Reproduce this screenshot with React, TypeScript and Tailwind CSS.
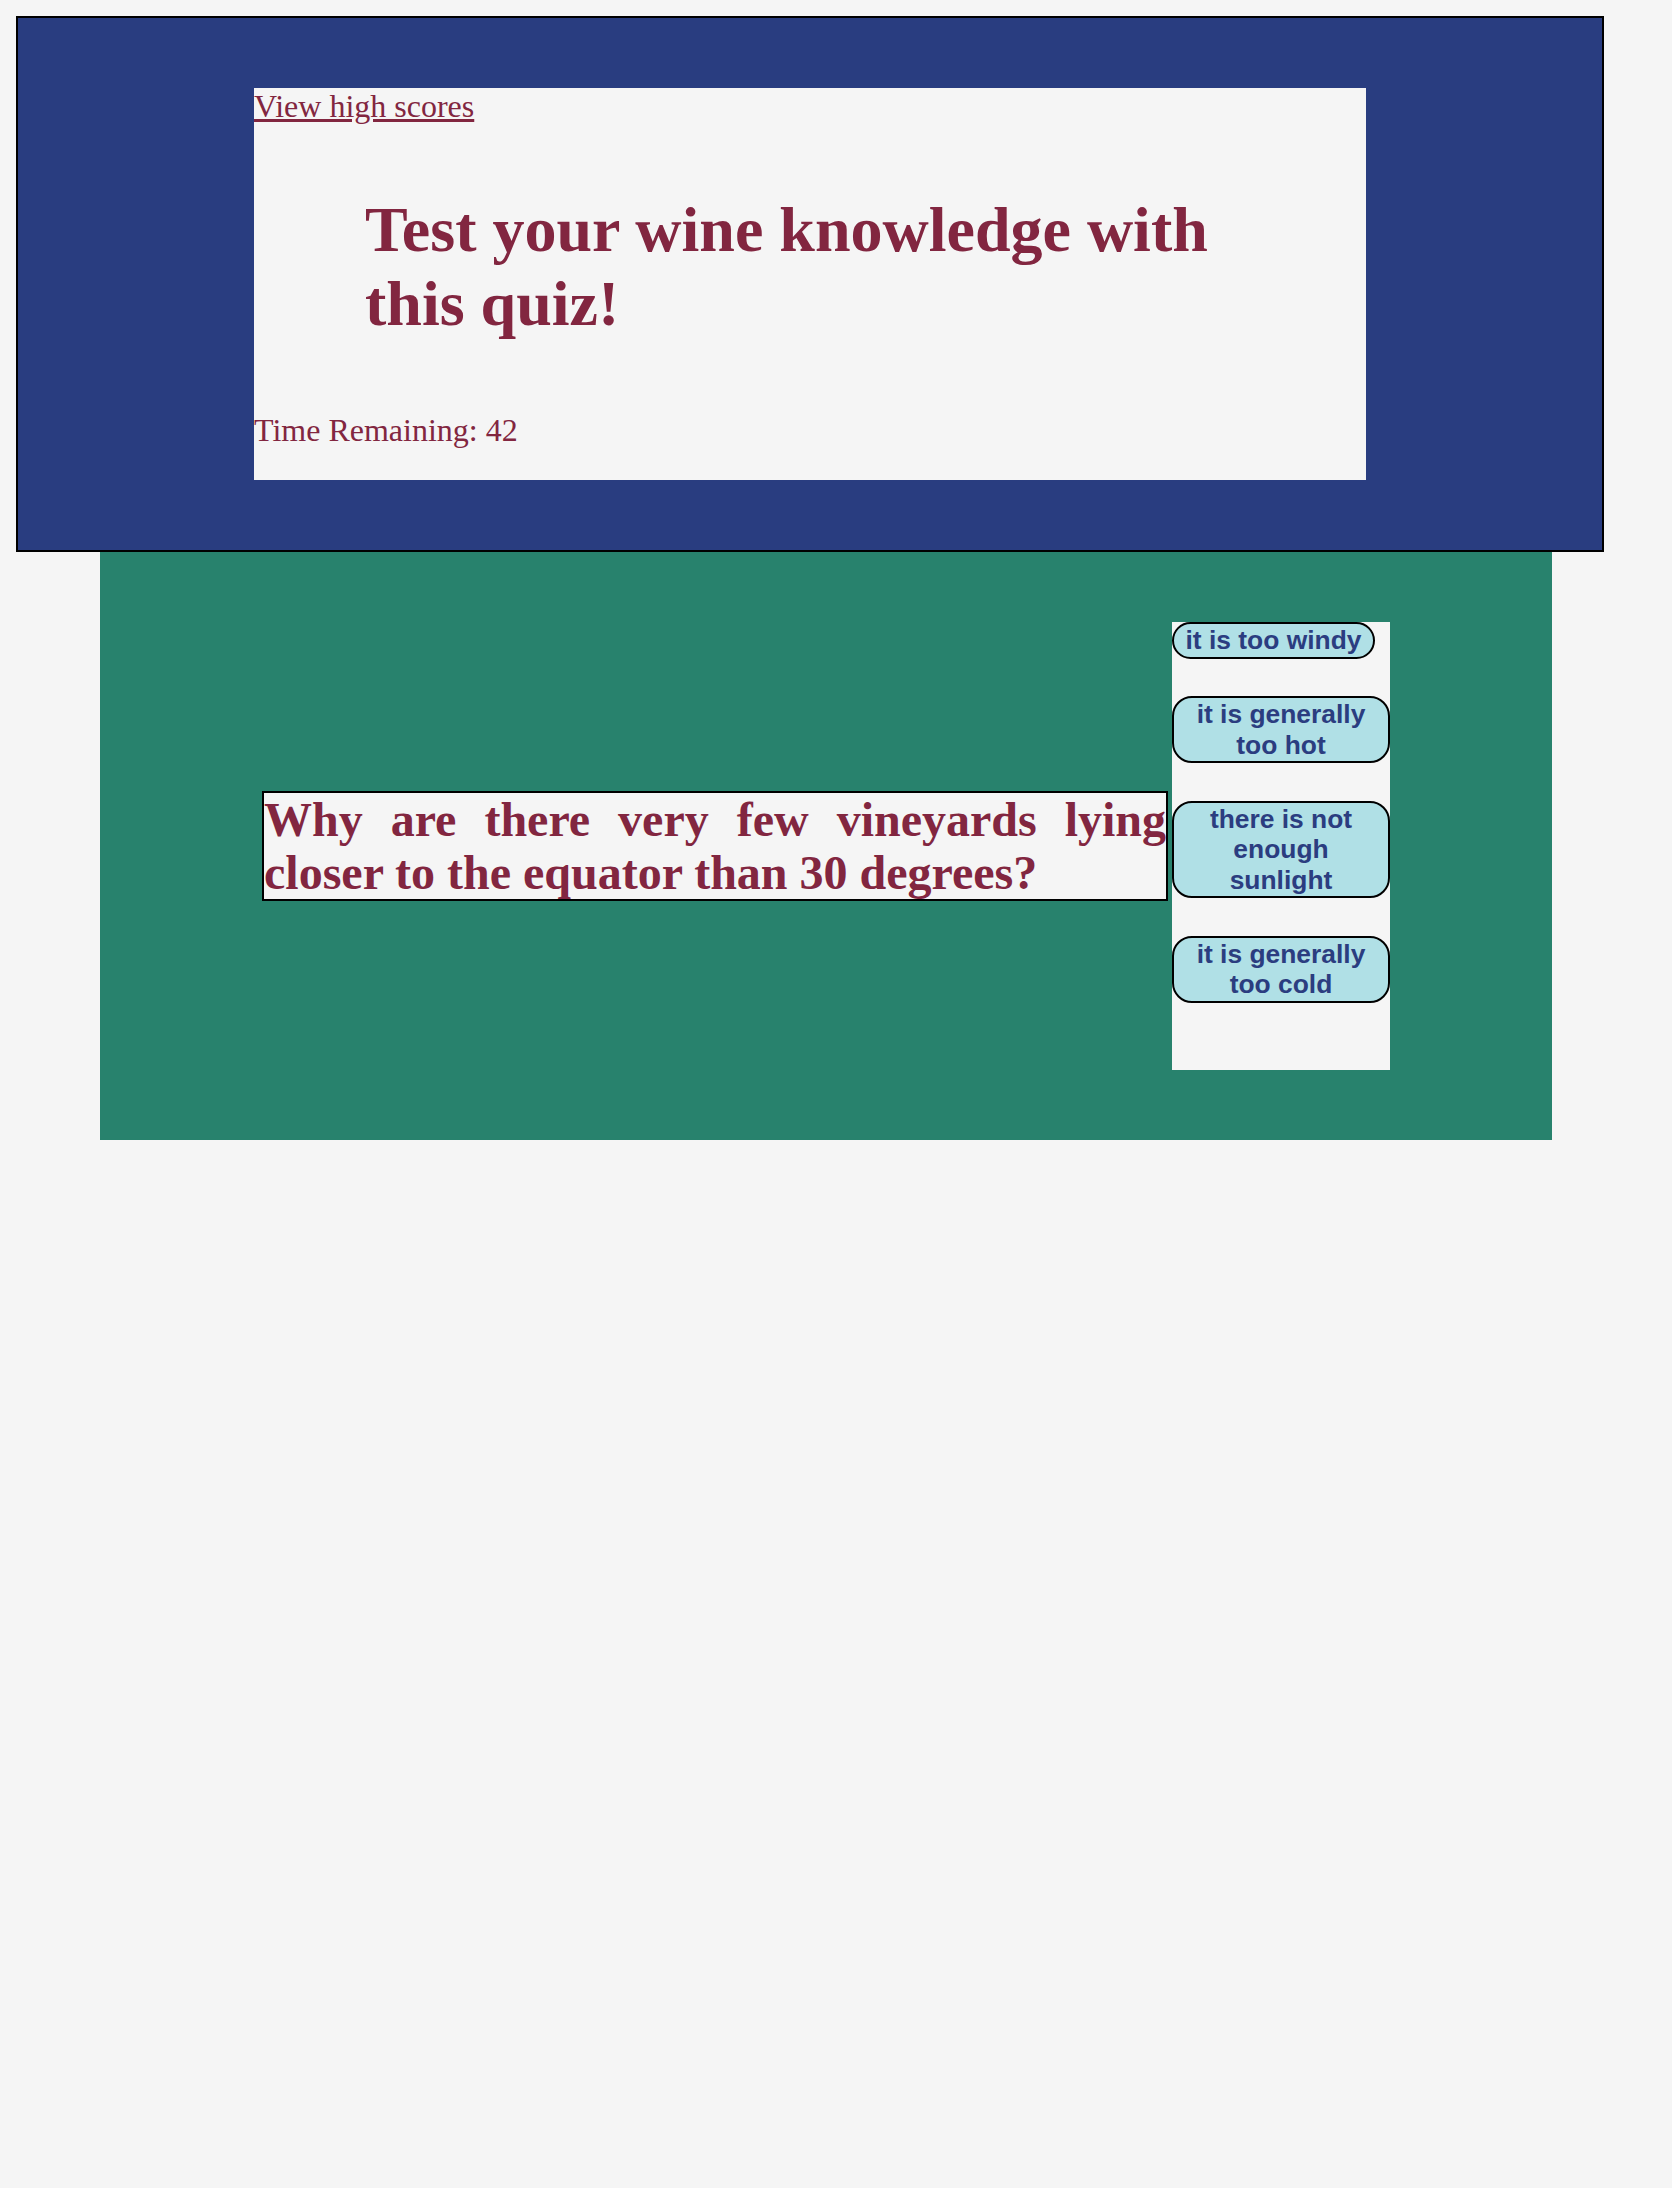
import React from "react";

const answers = [
  "it is too windy",
  "it is generally too hot",
  "there is not enough sunlight",
  "it is generally too cold",
];

export default function App() {
  return (
    <div className="min-h-screen w-full bg-[#f5f5f5] pt-[16px]" style={{ fontFamily: '"Liberation Serif", "Times New Roman", serif' }}>
      <header className="ml-[16px] w-[1588px] border-2 border-black bg-[#293d80] pt-[70px] pb-[70px]">
        <div className="mx-auto w-[1112px] bg-[#f5f5f5] pb-[31px]">
          <a href="#" className="block w-fit text-[32px] leading-[37px] text-[#822640] underline">
            View high scores
          </a>
          <h1 className="mt-[68px] ml-[111px] w-[890px] text-[64px] font-bold leading-[74px] text-[#822640]">
            Test your wine knowledge with this quiz!
          </h1>
          <p className="mt-[71px] text-[32px] leading-[37px] text-[#822640]">Time Remaining: 42</p>
        </div>
      </header>
      <main className="ml-[100px] flex w-[1452px] items-center justify-center gap-[4px] bg-[#28826d] py-[70px]">
        <div className="w-[906px] border-2 border-black bg-[#f5f5f5] text-justify text-[48px] font-bold leading-[53px] text-[#822640]">
          Why are there very few vineyards lying closer to the equator than 30 degrees?
        </div>
        <div className="flex h-[448px] w-[218px] flex-col items-start gap-[37.5px] bg-[#f5f5f5]">
          {answers.map((a) => (
            <button
              key={a}
              className="max-w-full rounded-[20px] border-2 border-black bg-[#b0e0e6] px-[11.5px] py-[1px] text-center text-[26.4px] font-bold leading-[30.5px] text-[#2b3d80]"
              style={{ fontFamily: '"Liberation Sans", Arial, sans-serif' }}
            >
              {a}
            </button>
          ))}
        </div>
      </main>
    </div>
  );
}
